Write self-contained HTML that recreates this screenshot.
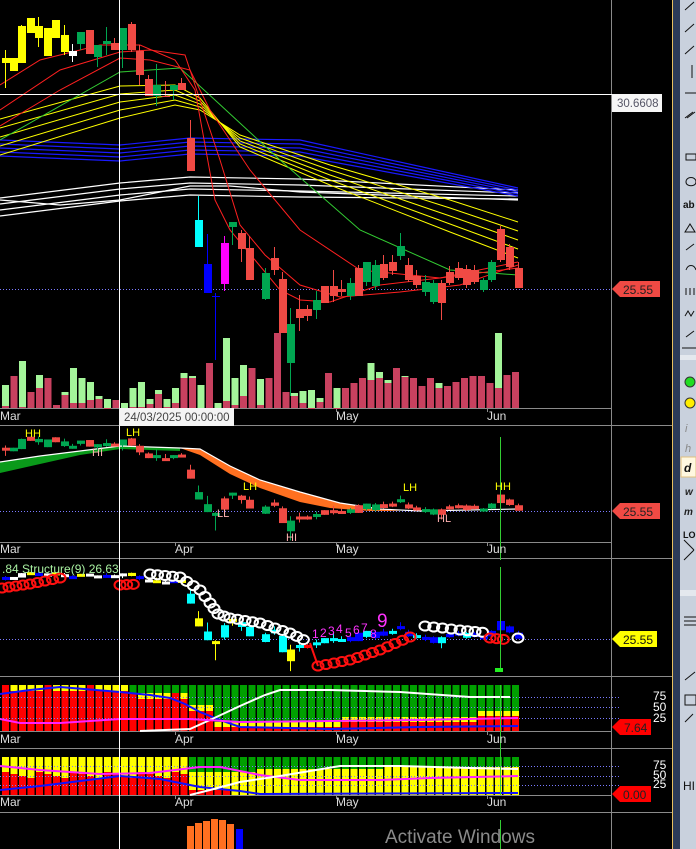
<!DOCTYPE html>
<html><head><meta charset="utf-8">
<style>
html,body{margin:0;padding:0;background:#000;}
body{width:696px;height:849px;overflow:hidden;position:relative;font-family:"Liberation Sans",sans-serif;}
svg{position:absolute;left:0;top:0;}
</style></head>
<body>
<svg id="s" width="696" height="849" viewBox="0 0 696 849" xmlns="http://www.w3.org/2000/svg" font-family="Liberation Sans, sans-serif">
<rect width="696" height="849" fill="#000"/>
<g id="g"></g>
<g font-size="12" fill="#ddd">
<text x="0" y="420">Mar</text><text x="175" y="420">Apr</text><text x="336" y="420">May</text><text x="487" y="420">Jun</text>
<text x="0" y="553">Mar</text><text x="175" y="553">Apr</text><text x="336" y="553">May</text><text x="487" y="553">Jun</text>
<text x="0" y="743">Mar</text><text x="175" y="743">Apr</text><text x="336" y="743">May</text><text x="487" y="743">Jun</text>
<text x="0" y="806">Mar</text><text x="175" y="806">Apr</text><text x="336" y="806">May</text><text x="487" y="806">Jun</text>
</g>
<rect x="119" y="408" width="115" height="18" fill="#f4f4f4"/>
<text x="124" y="421" font-size="11.5" fill="#444">24/03/2025 00:00:00</text>
<rect x="612" y="94" width="50" height="18" fill="#f6f6f6"/>
<text x="617" y="107" font-size="11.5" fill="#556">30.6608</text>
<polygon points="612,289 620,281 660,281 660,297 620,297" fill="#f04a44"/>
<text x="623" y="294" font-size="12" fill="#222">25.55</text>
<polygon points="612,511 620,503 660,503 660,519 620,519" fill="#f04a44"/>
<text x="623" y="516" font-size="12" fill="#222">25.55</text>
<polygon points="612,639 620,631 657,631 657,647 620,647" fill="#ffff00"/>
<text x="623" y="644" font-size="12" fill="#111">25.55</text>
<polygon points="612,727 620,719 651,719 651,735 620,735" fill="#ff0000"/>
<text x="624" y="732" font-size="12" fill="#222">7.64</text>
<polygon points="612,794 620,786 651,786 651,802 620,802" fill="#ff0000"/>
<text x="623" y="799" font-size="12" fill="#222">0.00</text>
<g font-size="12" fill="#fff">
<text x="653" y="700">75</text><text x="653" y="711">50</text><text x="653" y="722">25</text>
<text x="653" y="769">75</text><text x="653" y="779">50</text><text x="653" y="788">25</text>
</g>
<g font-size="11">
<text x="25" y="437" fill="#ffff00">HH</text>
<text x="126" y="436" fill="#ffff00">LH</text>
<text x="92" y="456" fill="#ffb0b0">HI</text>
<text x="243" y="490" fill="#ffff00">LH</text>
<text x="403" y="491" fill="#ffff00">LH</text>
<text x="495" y="490" fill="#ffff00">HH</text>
<text x="217" y="517" fill="#ffb0b0">LL</text>
<text x="437" y="522" fill="#ffb0b0">HL</text>
<text x="286" y="541" fill="#ffb0b0">HI</text>
</g>
<g fill="#ff33ff" font-size="12">
<text x="312" y="638">1</text><text x="320" y="637">2</text><text x="328" y="635">3</text><text x="336" y="633">4</text><text x="345" y="637">5</text><text x="353" y="634">6</text><text x="361" y="632">7</text><text x="370" y="638">8</text><text x="377" y="627" font-size="19">9</text>
</g>
<text x="385" y="843" font-size="19" fill="#8a8a8a">Activate Windows</text>
<rect x="672" y="0" width="1" height="849" fill="#e8c060"/>
<rect x="673" y="0" width="7" height="849" fill="#2c3b58"/>
<rect x="680" y="0" width="16" height="849" fill="#c9d1dd"/>
<g stroke="#111" fill="none" stroke-width="1">
<path d="M685 10l9-8M685 32l9-8M685 54l9-8M692 65v13M685 93h11M685 118l8-6M687 118l8-6M686 160h10v-6h-10zM686 182c0-6 10-6 10 0c0 5-10 5-10 0M685 232l5-8l5 8zM686 250l8-6M686 270c2-6 8-6 10 0M686 295v-7M690 295v-7M694 295v-7M685 316l3-5l3 5l3-5M686 337l8-6"/>
<path d="M682 348h14M684 540l10 10M684 560l10-10M684 617h12M684 621h12M684 625h12M685 680l10-8M685 705v-10h11v10zM685 722l8-8"/>
</g>
<text x="683" y="208" font-size="10" font-weight="bold" fill="#111">ab</text>
<rect x="680" y="355" width="16" height="5" fill="#e4e8ee"/>
<circle cx="690" cy="382" r="5" fill="#22dd22" stroke="#333"/>
<circle cx="690" cy="403" r="5" fill="#ffee00" stroke="#333"/>
<rect x="681" y="457" width="15" height="20" fill="#fff8e0" stroke="#e0c080"/>
<text x="684" y="472" font-size="12" font-style="italic" font-weight="bold" fill="#111">d</text>
<text x="685" y="432" font-size="11" font-style="italic" fill="#888">i</text>
<text x="685" y="452" font-size="11" font-style="italic" fill="#888">h</text>
<text x="685" y="495" font-size="10" font-style="italic" font-weight="bold" fill="#222">w</text>
<text x="684" y="515" font-size="10" font-style="italic" font-weight="bold" fill="#222">m</text>
<text x="683" y="538" font-size="9" font-weight="bold" fill="#111">LO</text>
<rect x="680" y="590" width="16" height="6" fill="#e4e8ee"/>
<text x="683" y="790" font-size="12" fill="#111">HI</text>
<g id="ov"></g>
</svg>
<script>
(function(){
var g=document.getElementById('g');var NS='http://www.w3.org/2000/svg';
function el(t,a,p){var e=document.createElementNS(NS,t);for(var k in a)e.setAttribute(k,a[k]);(p||g).appendChild(e);return e;}
function line(x1,y1,x2,y2,c,w,d){var a={x1:x1,y1:y1,x2:x2,y2:y2,stroke:c,'stroke-width':w||1};if(d)a['stroke-dasharray']=d;el('line',a);}
function pl(pts,c,w){el('polyline',{points:pts,fill:'none',stroke:c,'stroke-width':w||1});}
function rect(x,y,w,h,c){el('rect',{x:x,y:y,width:w,height:Math.max(h,1),fill:c});}
var gr='#8a8a8a';
[425,558,676,748,812].forEach(function(y){line(0,y+.5,672,y+.5,gr);});
[408,542,731,795].forEach(function(y){line(0,y+.5,612,y+.5,gr);});
line(611.5,0,611.5,849,gr);
[175,336,487].forEach(function(x){[408,542,731,795].forEach(function(y){line(x+.5,y,x+.5,y+4,gr);});});
var dc='#7a7aff';
line(0,289.5,612,289.5,dc,1,'1,2');line(0,511.5,612,511.5,dc,1,'1,2');line(0,639.5,612,639.5,dc,1,'1,2');
var vol=[[23,2],[32,32],[47,1],[16,16],[33,20],[30,30],[3,3],[16,13],[40,5],[30,5],[26,8],[12,9],[9,0],[5,8],[5,0],[20,1],[26,1],[9,4],[18,14],[9,1],[20,5],[35,30],[32,30],[23,0],[45,45],[5,0],[70,7],[30,3],[43,12],[40,40],[29,3],[23,30],[75,75],[16,16],[15,12],[17,5],[18,0],[10,6],[26,35],[20,0],[16,20],[25,25],[30,30],[45,28],[36,30],[28,25],[35,40],[32,31],[28,30],[22,22],[29,30],[25,20],[20,22],[26,26],[30,30],[28,32],[20,32],[25,25],[75,20],[30,33],[35,36]];
for(var i=0;i<vol.length;i++){var x=2+i*8.5,v=vol[i];rect(x,408-v[0],7,v[0],'#a4f59a');rect(x,408-v[1],7,v[1],'#c8415f');}
function band(n,y0,y1,ymid,y2,c,step){for(var k=0;k<n;k++){var o=k*step;pl('0,'+(y0+o)+' 120,'+(y1+o)+' 190,'+(ymid+o)+' 300,'+(ymid+o+2)+' 518,'+(y2+o/2),c,1.2);}}
band(4,198,183,177,190,'#ffffff',6);
band(5,140,145,138,188,'#1a1aff',4);
pl('0,200 60,205 120,200 190,186 230,186 300,192 518,200','#fff',1.2);
for(var k=0;k<5;k++){pl('0,'+(155-k*9)+' 120,'+(118-k*8)+' 175,'+(105-k*5)+' 200,'+(110-k*3)+' 240,'+(135+k*3)+' 330,'+(165+k*5)+' 450,'+(200+k*8)+' 518,'+(222+k*9),'#ffff00',1);}
pl('0,140 120,72 180,68 215,100 280,160 360,230 450,270 518,275','#33cc33',1);
pl('0,126 60,90 120,58 150,60 190,70 210,110 250,170 300,230 360,270 440,278 518,268','#ff2020',1);
pl('0,110 60,70 120,52 150,50 185,55 200,100 220,160 240,225 265,255 300,285 340,297 400,292 460,285 518,265','#ff2020',1);
pl('0,85 40,60 100,45 140,45 175,60 195,90 215,200 230,230 280,290 300,300 330,302 380,285 440,278 518,262','#ff2020',1);
var R='#f04a44',G='#00a651',Y='#ffff00';
var C=[[5,58,63,50,88,Y],[13,58,71,58,71,Y],[21,26,63,25,63,Y],[30,18,33,18,33,Y],[38,26,38,17,47,Y],[47,28,56,28,56,Y],[55,20,38,20,38,Y],[64,35,52,25,55,Y],[72,51,56,44,62,'#fff'],[80,32,44,32,50,G],[89,30,54,30,54,R],[97,45,57,45,67,G],[106,41,44,27,55,G],[114,43,50,38,50,R],[122,28,50,28,68,G],[131,24,50,22,52,R],[139,51,75,45,85,R],[148,79,96,75,96,R],[156,85,96,64,106,G],[165,96,97,81,97,R],[173,85,90,85,100,G],[181,83,90,78,90,R],[190,138,171,120,171,R],[198,220,247,196,247,'#00ffff'],[207,264,293,234,293,'#0000ff'],[215,296,297,293,360,'#0000ff'],[224,243,284,236,291,'#ff00ff'],[232,222,227,222,245,G],[241,233,249,230,262,R],[249,248,280,236,280,R],[265,273,299,268,300,G],[274,258,270,247,275,R],[282,279,333,272,333,R],[290,324,363,308,396,G],[299,309,318,295,331,R],[307,309,316,305,321,R],[316,300,310,291,319,G],[324,286,303,286,303,R],[333,286,296,270,302,R],[341,289,292,280,296,R],[350,283,296,278,300,G],[358,268,296,265,296,R],[366,262,282,262,286,G],[375,265,286,260,290,G],[383,264,278,255,280,R],[392,262,271,255,275,R],[400,246,256,233,260,G],[408,265,280,258,282,R],[416,276,285,270,288,R],[425,282,292,275,296,G],[433,283,302,280,304,G],[441,283,303,280,320,R],[449,272,283,266,285,R],[458,268,278,262,280,R],[466,269,285,265,288,R],[474,270,282,265,284,R],[483,280,290,278,292,G],[491,262,280,260,282,G],[500,229,260,226,262,R],[509,247,267,244,270,R],[518,268,288,262,288,R]];
C.forEach(function(c){line(c[0]+.5,c[3],c[0]+.5,c[4],c[5]);rect(c[0]-3,c[1],8,c[2]-c[1],c[5]);});
el('polygon',{points:'0,462 40,456 80,451 120,446 180,448 180,451 120,449 80,455 40,464 0,473',fill:'#0a9a1a'});
el('polygon',{points:'180,448 200,449 230,466 260,480 300,492 340,503 380,509 400,511 370,511 330,508 300,502 260,488 230,474 200,455',fill:'#ff7020'});
pl('0,462 40,456 80,451 120,446 180,448 200,449 230,466 260,480 300,492 340,503 380,509 420,511 518,509','#fff',1.2);
C.forEach(function(c,i){var f=function(y){return 511+(y-289)*0.274;};var col=(c[5]==R||c[5]=='#ff00ff')?R:G;if(c[5]==Y)col=(i%3==0)?R:G;var t=f(c[1]),b=f(c[2]);line(c[0]+.5,f(c[3]),c[0]+.5,f(c[4]),col);rect(c[0]-3,t,8,Math.max(b-t,3),col);});
line(500.5,437,500.5,560,'#3c3',1);
C.forEach(function(c,i){var f;if(i<22){f=function(y){return 576+(y-50)*0.12;};}else f=function(y){return 639+(y-289)*0.3;};var col;if(i<22)col=(i%4==0)?'#0000ff':(i%3==0?'#ffff00':'#ffffff');else if(i<40)col=(c[5]==R?'#00ffff':(i%2?'#ffff00':'#00ffff'));else col=(i>55)?'#0000ff':(i%3==0?'#00ffff':'#0000ff');if(i==35)col='#ff0000';var t=f(c[1]),b=f(c[2]);line(c[0]+.5,f(c[3]),c[0]+.5,f(c[4]),col);rect(c[0]-3,t,8,Math.max(b-t,3),col);});
function chain(pts,c){for(var i=0;i<pts.length-1;i++){var a=pts[i],b=pts[i+1];var dx=b[0]-a[0],dy=b[1]-a[1];var n=Math.max(1,Math.round(Math.sqrt(dx*dx+dy*dy)/8));for(var j=0;j<n;j++){el('ellipse',{cx:a[0]+dx*j/n,cy:a[1]+dy*j/n,rx:5.5,ry:4.5,fill:'none',stroke:c,'stroke-width':2});}}}
chain([[2,588],[30,584],[60,578],[70,576]],'#ff1010');
chain([[120,585],[140,584]],'#ff1010');
chain([[150,574],[180,577],[200,590],[210,603],[218,614],[230,618],[260,623],[290,633],[310,643]],'#ffffff');
chain([[318,666],[350,660],[380,650],[410,637],[418,635]],'#ff1010');
chain([[425,626],[460,630],[490,633]],'#ffffff');
chain([[490,638],[510,640]],'#ff1010');
el('ellipse',{cx:518,cy:638,rx:5.5,ry:4.5,fill:'none',stroke:'#fff','stroke-width':2});
line(310,643,318,666,'#ff1010',2);
line(500.5,567,500.5,672,'#3c3',1);rect(495,668,8,4,'#22ee22');
var ov=document.getElementById('ov');
var t3=el('text',{x:2,y:573,'font-size':12,fill:'#a8f0a0'},ov);t3.textContent='.84 Structure(9) 26.63';
for(var i=0;i<61;i++){var x=2+i*8.5,tp=685,bt=731;
 if(i<22){var ys=tp+(i%5==0?0:6)+(i>14?8:0);rect(x,tp,7,bt-tp,'#ffff00');if(i>14)rect(x,tp,7,8,'#00a000');rect(x,ys,7,bt-ys,'#ff0000');}
 else{var gb=tp+(i<25?20:(i<40?37:32))+(i>55?-6:0);rect(x,tp,7,bt-tp,'#00a000');rect(x,gb,7,bt-gb,'#ffff00');var rb=gb+(i<25?6:5);rect(x,rb,7,bt-rb,'#ff0000');}}
[697,707,718].forEach(function(y){line(0,y+.5,620,y+.5,dc,1,'1,2');});
pl('0,694 30,690 60,687 120,692 150,695 170,698 185,704 200,712 220,720 240,727 330,729 420,727 518,726','#1010ff',2);
pl('140,731 190,729 210,720 240,706 265,695 280,690 330,690 400,692 470,697 510,697','#ffffff',2);
pl('0,719 20,723 60,723 120,719 190,719 240,722 330,721 420,720 518,718','#ff20ff',2);
for(var i=0;i<61;i++){var x=2+i*8.5,tp=757,bt=795;
 if(i<22){rect(x,tp,7,bt-tp,'#ffff00');var rs=772+(i%4)*2;rect(x,rs,7,bt-rs,'#ff0000');}
 else{var gb=(i<30?772:(i<45?769:767));rect(x,tp,7,bt-tp,'#00a000');rect(x,gb,7,bt-gb,'#ffff00');if(i<27)rect(x,790,7,5,'#ff0000');}}
[766,776,785].forEach(function(y){line(0,y+.5,620,y+.5,dc,1,'1,2');});
pl('0,766 40,770 100,774 150,773 200,767 220,767 260,775 300,780 380,780 430,778 518,776','#ff20ff',2);
pl('0,790 40,786 80,781 120,776 160,779 200,787 240,791 260,794 518,793','#1010ff',2);
pl('190,795 210,790 240,782 280,776 340,766 400,766 470,768 518,769','#ffffff',2);
[[187,826],[195,823],[203,821],[211,819],[219,820],[227,824]].forEach(function(b){rect(b[0],b[1],7,849-b[1],'#ff7020');});
rect(236,829,7,20,'#0000ff');
line(500.5,820,500.5,849,'#3c3',1);
line(500.5,685,500.5,795,'#3c3',1);
line(119.5,0,119.5,849,'#fff',1);
line(0,94.5,612,94.5,'#fff',1);
})();
</script>
</body></html>
